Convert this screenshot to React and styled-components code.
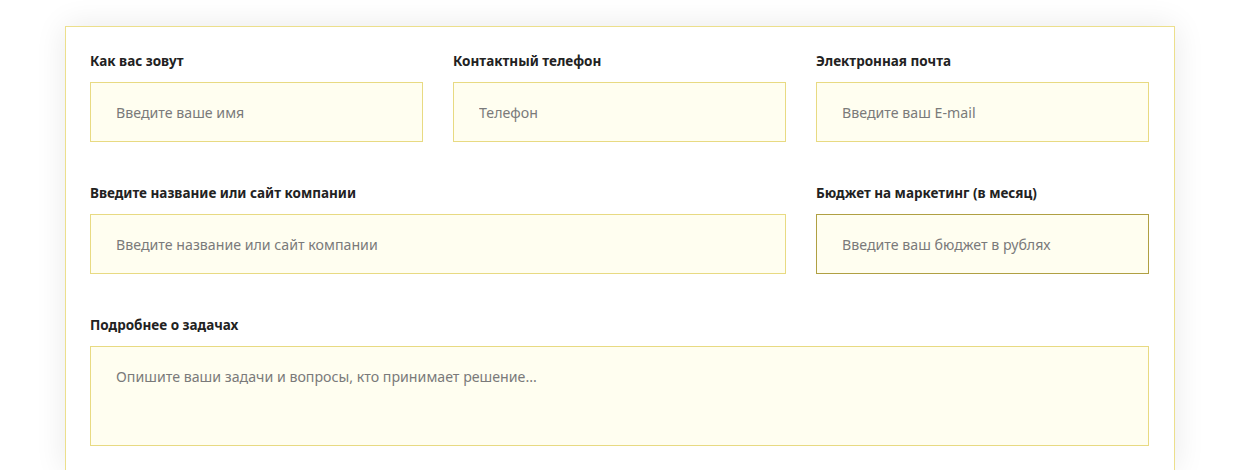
import React from 'react'
import styled, { createGlobalStyle } from 'styled-components'

const GlobalStyle = createGlobalStyle`
  body {
    margin: 0;
    background: #ffffff;
    font-family: "Noto Sans", "Open Sans", sans-serif;
  }
`

const Page = styled.div`
  padding: 26px 0 0 65px;
  display: flex;
`

const Card = styled.form`
  width: 1110px;
  box-sizing: border-box;
  border: 1px solid #ecdf8c;
  background: #fff;
  box-shadow: 0 0 30px rgba(0, 0, 0, 0.09);
  padding: 24px 25px 24px 24px;
  display: grid;
  grid-template-columns: repeat(3, 1fr);
  column-gap: 30px;
  row-gap: 41px;
`

const Field = styled.div`
  display: flex;
  flex-direction: column;
  gap: 11px;
  grid-column: span ${p => p.span || 1};
`

const Label = styled.label`
  font-size: 13.5px;
  line-height: 20px;
  font-weight: 700;
  color: #222;
`

const Input = styled.input`
  height: 60px;
  box-sizing: border-box;
  border: 1px solid ${p => (p.active ? '#b0a043' : '#e8da82')};
  background: #fffef0;
  padding: 0 25px;
  font-family: inherit;
  font-size: 14.2px;
  color: #333;
  outline: none;
  &::placeholder {
    color: #7a7a7a;
  }
`

const TextArea = styled.textarea`
  height: 100px;
  box-sizing: border-box;
  border: 1px solid #e8da82;
  background: #fffef0;
  padding: 20px 25px;
  font-family: inherit;
  font-size: 14.2px;
  color: #333;
  resize: none;
  outline: none;
  &::placeholder {
    color: #7a7a7a;
  }
`

export default function App() {
  return (
    <Page>
      <GlobalStyle />
      <Card onSubmit={e => e.preventDefault()}>
        <Field>
          <Label>Как вас зовут</Label>
          <Input placeholder="Введите ваше имя" />
        </Field>
        <Field>
          <Label>Контактный телефон</Label>
          <Input placeholder="Телефон" />
        </Field>
        <Field>
          <Label>Электронная почта</Label>
          <Input placeholder="Введите ваш E-mail" />
        </Field>
        <Field span={2}>
          <Label>Введите название или сайт компании</Label>
          <Input placeholder="Введите название или сайт компании" />
        </Field>
        <Field>
          <Label>Бюджет на маркетинг (в месяц)</Label>
          <Input active placeholder="Введите ваш бюджет в рублях" />
        </Field>
        <Field span={3}>
          <Label>Подробнее о задачах</Label>
          <TextArea placeholder="Опишите ваши задачи и вопросы, кто принимает решение..." />
        </Field>
      </Card>
    </Page>
  )
}
